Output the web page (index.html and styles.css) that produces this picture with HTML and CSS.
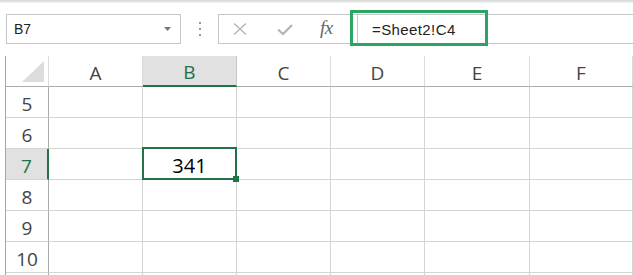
FILE: index.html
```html
<!DOCTYPE html>
<html>
<head>
    <title>Sheet</title>
    <link rel="stylesheet" href="styles.css">
</head>
<body>
    <div class="shade"></div>
    <div class="formula-row">
        <div class="name-box">
            <span>B7</span>
            <svg class="caret" width="7" height="4" viewBox="0 0 7 4"><path d="M0 0h7L3.5 4z" fill="#777"/></svg>
        </div>
        <div class="grip"><i></i><i></i><i></i></div>
        <div class="fx-bar">
            <div class="fx-buttons">
                <svg class="cancel" width="14" height="12" viewBox="0 0 14 12">
                    <path d="M1 0.5L13 11.5M13 0.5L1 11.5" stroke="#b3b3b3" stroke-width="1.3" fill="none"/>
                </svg>
                <svg class="enter" width="16" height="11" viewBox="0 0 16 11">
                    <path d="M1 5.5L6 10L15 1" stroke="#b3b3b3" stroke-width="2.2" fill="none"/>
                </svg>
                <span class="fx">fx</span>
            </div>
            <div class="formula">=Sheet2!C4</div>
            <div class="highlight"></div>
        </div>
    </div>

    <div class="sheet">
        <div class="corner"></div>
        <div class="col-head">A</div>
        <div class="col-head active">B</div>
        <div class="col-head">C</div>
        <div class="col-head">D</div>
        <div class="col-head">E</div>
        <div class="col-head">F</div>

        <div class="row-head">5</div>
        <div class="cell"></div><div class="cell"></div><div class="cell"></div><div class="cell"></div><div class="cell"></div><div class="cell"></div>

        <div class="row-head">6</div>
        <div class="cell"></div><div class="cell"></div><div class="cell"></div><div class="cell"></div><div class="cell"></div><div class="cell"></div>

        <div class="row-head active">7</div>
        <div class="cell"></div><div class="cell selected">341</div><div class="cell"></div><div class="cell"></div><div class="cell"></div><div class="cell"></div>

        <div class="row-head">8</div>
        <div class="cell"></div><div class="cell"></div><div class="cell"></div><div class="cell"></div><div class="cell"></div><div class="cell"></div>

        <div class="row-head">9</div>
        <div class="cell"></div><div class="cell"></div><div class="cell"></div><div class="cell"></div><div class="cell"></div><div class="cell"></div>

        <div class="row-head">10</div>
        <div class="cell"></div><div class="cell"></div><div class="cell"></div><div class="cell"></div><div class="cell"></div><div class="cell"></div>

        <!-- row 11 starts at the bottom edge, only its grid lines show -->
        <div class="row-head"></div>
        <div class="cell"></div><div class="cell"></div><div class="cell"></div><div class="cell"></div><div class="cell"></div><div class="cell"></div>
    </div>
</body>
</html>
```

FILE: styles.css
```css
body {
    margin: 0;
    background: white;
    font-family: "Liberation Sans", Arial, sans-serif;
    color: #222;
    width: 633px;
    height: 275px;
    overflow: hidden;
}

.shade {
    height: 3px;
    background: linear-gradient(#d4d4d4, #f4f4f4);
}

/* formula bar */

.formula-row {
    display: flex;
    align-items: stretch;
    height: 30px;
    margin-top: 11px;
}

.name-box {
    box-sizing: border-box;
    width: 175px;
    margin-left: 6px;
    border: 1px solid #c6c6c6;
    display: flex;
    align-items: center;
    justify-content: space-between;
    padding: 0 9px 0 7px;
    font-size: 14px;
    color: #222;
}

.grip {
    width: 37px;
    display: flex;
    flex-direction: column;
    align-items: center;
    justify-content: center;
    gap: 4px;
}

.grip i {
    display: block;
    width: 2px;
    height: 2px;
    background: #9a9a9a;
}

.fx-bar {
    flex: 1;
    display: flex;
    position: relative;
}

.fx-buttons {
    box-sizing: border-box;
    width: 139px;
    border: 1px solid #c6c6c6;
    border-right: none;
    display: flex;
    align-items: center;
    padding-left: 14px;
}

.enter {
    margin-left: 30px;
}

.fx {
    margin-left: 27px;
    font-family: "Liberation Serif", "Times New Roman", serif;
    font-style: italic;
    font-size: 19px;
    color: #666;
    letter-spacing: -0.5px;
    margin-top: -2px;
}

.formula {
    flex: 1;
    border: 1px solid #c6c6c6;
    border-right: none;
    padding-left: 14px;
    display: flex;
    align-items: center;
    font-size: 15px;
    letter-spacing: 0.4px;
    color: #222;
}

.highlight {
    position: absolute;
    left: 132px;
    top: -4px;
    width: 132px;
    height: 30px;
    border: 3px solid #2aa562;
}

/* grid */

.sheet {
    margin-top: 12px;
    margin-left: 5px;
    border-left: 1px solid #a6a6a6;
    display: grid;
    grid-template-columns: 43px 94px 94px 94px 94px 105px 103px;
    grid-auto-rows: 31px;
    font-family: "Open Sans", "Liberation Sans", sans-serif;
    font-size: 19px;
}

.sheet > div {
    box-sizing: border-box;
    display: flex;
    align-items: center;
    justify-content: center;
    padding-top: 3px;
}

.corner {
    position: relative;
    border-right: 1px solid #dadada;
    border-bottom: 1px solid #ababab;
}

.corner::after {
    content: "";
    position: absolute;
    left: 16px;
    top: 5px;
    width: 22px;
    height: 21px;
    background: #dcdcdc;
    clip-path: polygon(100% 0, 100% 100%, 0 100%);
}

.col-head {
    color: #444;
    border-right: 1px solid #dadada;
    border-bottom: 1px solid #ababab;
}

.col-head.active {
    background: #e1e1e1;
    color: #217346;
    border-bottom: 2px solid #217346;
    border-right-color: #c8c8c8;
}

.row-head {
    color: #444;
    border-right: 1px solid #ababab;
    border-bottom: 1px solid #d4d4d4;
}

.row-head.active {
    background: #e1e1e1;
    color: #217346;
    border-right: 2px solid #217346;
}

.cell {
    border-right: 1px solid #d4d4d4;
    border-bottom: 1px solid #d4d4d4;
}

.cell.selected {
    position: relative;
    color: #000;
    font-size: 20px;
}

.cell.selected::before {
    content: "";
    position: absolute;
    left: -1px;
    top: -2px;
    right: -1px;
    bottom: -1px;
    border: 2px solid #217346;
}

.cell.selected::after {
    content: "";
    position: absolute;
    right: -3px;
    bottom: -3px;
    width: 6px;
    height: 6px;
    background: #217346;
}
```
